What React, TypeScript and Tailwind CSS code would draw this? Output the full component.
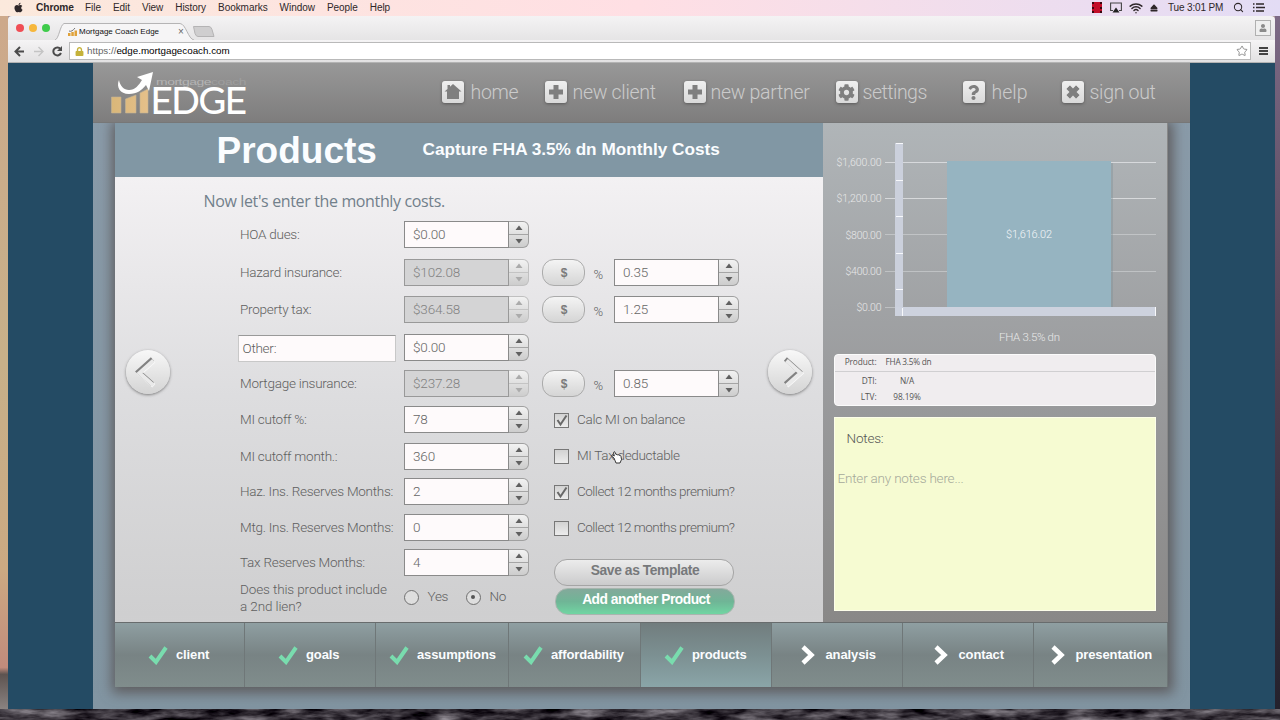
import type { ReactNode } from "react";
import { Wifi, Search, Star } from "lucide-react";
import { FaApple, FaCog, FaQuestion, FaUser, FaLock, FaEject } from "react-icons/fa";

const menus = ["File", "Edit", "View", "History", "Bookmarks", "Window", "People", "Help"];

function MenuBar() {
  return (
    <div className="flex h-4 shrink-0 items-center bg-gradient-to-r from-[#fbe9dc] via-[#ffdfe4] to-[#e3dcf5] pb-px pl-[13px] text-[10px] text-[#2e2729]">
      <FaApple className="h-[11px] w-[11px]" />
      <b className="ml-3 w-[37px] text-[10.200px] tracking-[-0.1px]">Chrome</b>
      <div className="ml-3 flex gap-3 tracking-[-0.050px]">
        {menus.map((m) => (
          <span key={m}>{m}</span>
        ))}
      </div>
      <div className="ml-auto flex items-center pr-[15px]">
        <div className="h-[11px] w-[10px] border-x-2 border-dotted border-[#3a0710] bg-[#c20d28]" />
        <svg className="ml-[8px]" width="12" height="11" viewBox="0 0 12 11">
          <path d="M3 8.500H.600V1h10.800v7.500H9" fill="none" stroke="#444" strokeWidth="1.100" />
          <path d="M6 5.500l3.500 5h-7z" fill="#222" />
        </svg>
        <Wifi className="ml-[7px] h-[14px] w-[14px]" strokeWidth={2.5} />
        <FaEject className="ml-[7px] h-[8px] w-[8px]" />
        <span className="ml-[10px] w-[56px] whitespace-nowrap tracking-[-0.150px]">Tue 3:01 PM</span>
        <Search className="ml-[9px] h-[11px] w-[11px]" strokeWidth={2.2} />
        <svg className="ml-[9px] h-[9px] w-3" viewBox="0 0 12 9" stroke="currentColor" strokeWidth="1.4">
          <path d="M0 1h1.5M0 4.500h1.5M0 8h1.500M3 1h8M3 4.500h9M3 8h8" />
        </svg>
      </div>
    </div>
  );
}

function BrowserChrome() {
  return (
    <div className="h-[47px] shrink-0 rounded-t bg-gradient-to-b from-[#f4f3f4] to-[#d8d7d8]">
      <div className="flex h-6 items-end pr-[4px] pl-2">
        <div className="mb-2 flex gap-[5px]">
          <span className="h-2 w-2 rounded-full bg-[#f04e55]" />
          <span className="h-2 w-2 rounded-full bg-[#f6b73c]" />
          <span className="h-2 w-2 rounded-full bg-[#3fcb4b]" />
        </div>
        <div className="relative ml-[5px] h-[17px] w-[139px]">
          <svg className="absolute inset-0" width="139" height="17">
            <path d="M0 17C4 16 5 2 9 .500H125C131 1 133 16 139 17" fill="#f6f5f6" stroke="#b5b4b5" />
          </svg>
          <div className="relative flex h-full items-center pl-[13px] text-[8px] text-[#111]">
            <svg width="9" height="9" viewBox="0 0 9 9">
              <path d="M0 6h2.500v3H0zM3.300 5h2.500v4H3.300zM6.500 3.500H9V9H6.500z" fill="#e0a23a" />
              <path d="M1 4c2 1 4-.5 6-3" fill="none" stroke="#777" />
            </svg>
            <span className="ml-[2px] w-[80px] whitespace-nowrap">Mortgage Coach Edge</span>
            <span className="ml-[19px] text-[10px] leading-none text-[#666]">×</span>
          </div>
        </div>
        <svg className="mb-[3px] -ml-px" width="22" height="11">
          <path d="M.500.500H16q2 0 3 3l2 7H5q-2 0-3-3z" fill="#cfcecf" stroke="#b4b3b4" />
        </svg>
        <div className="mb-1 ml-auto flex h-4 w-4 items-end justify-center border border-[#b0b0b0] bg-[#efefef] pb-[3px]">
          <FaUser className="h-2 w-2 text-[#8b8b8b]" />
        </div>
      </div>
      <div className="flex h-[23px] items-center border-b border-[#b3b3b3] bg-gradient-to-b from-[#f5f4f5] to-[#e2e1e2] pl-[6px]">
        <svg width="50" height="11" viewBox="0 0 50 11" fill="none" strokeWidth="2">
          <path d="M10 5.500H1.800M6 1L1.500 5.500 6 10" stroke="#4b4b4b" />
          <path d="M20 5.500h8M24.500 1L29 5.500 24.500 10" stroke="#c4c4c4" strokeWidth="1.400" />
          <path d="M46.500 3A4 4 0 1 0 47 7" stroke="#4b4b4b" />
          <path d="M48 0v5h-5z" fill="#4b4b4b" />
        </svg>
        <div className="ml-[5px] flex h-[18px] w-[1182px] items-center border border-[#b9b9b9] bg-white pl-[5px]">
          <FaLock className="h-[9px] w-[9px] text-[#c5b23a]" />
          <span className="ml-[3px] text-[9.8px] text-[#666]">
            https://<span className="text-black">edge.mortgagecoach.com</span>
          </span>
          <Star className="mr-[2px] ml-auto h-3 w-3 text-[#777]" strokeWidth={1.6} />
        </div>
        <div className="ml-[8px] flex w-[9px] flex-col gap-[1px]">
          <i className="h-[2px] bg-[#444]" />
          <i className="h-[2px] bg-[#444]" />
          <i className="h-[2px] bg-[#444]" />
        </div>
      </div>
    </div>
  );
}

function Logo() {
  return (
    <svg width="138" height="48" viewBox="0 0 138 48">
      <defs>
        <linearGradient id="bars" x2="1">
          <stop offset="0" stopColor="#d9b779" />
          <stop offset="1" stopColor="#e5c08a" />
        </linearGradient>
      </defs>
      <g fill="url(#bars)" stroke="#c3b496" strokeWidth=".6">
        <path d="M1.500 25h9.500v16H1.500zM15.500 27l10.500-4v18H15.500zM30 21l8-4v24h-8z" />
      </g>
      <path d="M9 8C6 15 10 22 19 22c8 0 13-4 17-9l3 6L43 0 27 5l5 3c-3 5-7 10-13 10-5 0-9-4-10-10z" fill="#fff" />
      <text x="46" y="12.500" fontSize="9" fill="#b4b4b4" textLength="90" lengthAdjust="spacingAndGlyphs" fontFamily="Liberation Sans">
        mortgage<tspan fill="#9e9e9e">coach</tspan>
      </text>
      <text x="41" y="40.500" fontSize="35" fill="#fff" stroke="#fff" strokeWidth="1.900" textLength="95" lengthAdjust="spacingAndGlyphs" fontFamily="Lato">
        EDGE
      </text>
    </svg>
  );
}

function HeaderLink({ icon, label, className }: { icon: ReactNode; label: string; className: string }) {
  return (
    <div className={`flex items-center ${className}`}>
      <span className="flex h-[22px] w-[22px] shrink-0 items-center justify-center rounded-[3px] bg-gradient-to-b from-[#efefef] to-[#d9d9d9] text-[#7f7f7f] shadow-[0_1px_3px_rgba(60,60,60,.6)]">
        {icon}
      </span>
      <span className="mt-px whitespace-nowrap">{label}</span>
    </div>
  );
}

function Plus({ className }: { className?: string }) {
  return (
    <svg width="14" height="14" viewBox="0 0 14 14" className={className}>
      <path d="M4.500 0h5v4.500H14v5H9.500V14h-5V9.500H0v-5h4.500z" fill="currentColor" />
    </svg>
  );
}

function House() {
  return (
    <svg width="18" height="18" viewBox="0 0 18 18">
      <path d="M9 1l8.500 7.500H15V16H3V8.500H.500L3.500 6V2h2.500v1.700z" fill="currentColor" />
    </svg>
  );
}

function AppHeader() {
  return (
    <header className="relative z-10 flex h-[60px] items-start border-b border-[#777] bg-gradient-to-b from-[#989898] to-[#7e7d7d] font-[Roboto] text-[19.500px] font-light tracking-[-0.300px] text-[#cbcbcb]">
      <div className="mt-[9px] ml-[17px] w-[332px]">
        <Logo />
      </div>
      <nav className="mt-[14px] flex">
        <HeaderLink className="w-[103px] gap-[7px]" label="home" icon={<House />} />
        <HeaderLink className="w-[139px] gap-[6px]" label="new client" icon={<Plus />} />
        <HeaderLink className="w-[152px] gap-[5px]" label="new partner" icon={<Plus />} />
        <HeaderLink className="w-[127px] gap-[5px] tracking-[-0.500px]" label="settings" icon={<FaCog size={17} />} />
        <HeaderLink className="w-[99px] gap-[7px] tracking-normal" label="help" icon={<FaQuestion size={15} />} />
        <HeaderLink className="gap-[6px]" label="sign out" icon={<Plus className="rotate-45" />} />
      </nav>
    </header>
  );
}

// chevron pressed into the button: dark upper left edges, bright lower right edges
function ArrowButton({ points }: { points: string }) {
  return (
    <div className="h-[44px] w-[44px] rounded-full bg-gradient-to-b from-[#f8f8f8] to-[#d4d4d4] shadow-[0_1px_3px_rgba(90,90,90,.75)]">
      <svg width="44" height="44" fill="none" strokeWidth="4.500">
        <polyline points={points} stroke="#fbfbfb" transform="translate(.8 .8)" />
        <polyline points={points} stroke="#828282" transform="translate(-.6 -1)" />
        <polyline points={points} stroke="#eaeaea" strokeWidth="4" transform="translate(.5 .5)" />
      </svg>
    </div>
  );
}

function NumberField({ value, disabled }: { value: string; disabled?: boolean }) {
  return (
    <div className="flex h-[27px]">
      <div
        className={`flex w-[105px] items-center border pb-px pl-[8.500px] tracking-[-0.150px] ${
          disabled ? "border-[#999] bg-[#d4d4d5] text-[#828282]" : "border-[#8a8a8a] bg-[#fefafb] text-[#666]"
        }`}
      >
        {value}
      </div>
      <div
        className={`flex w-5 flex-col rounded-r-md border border-l-0 bg-gradient-to-b from-[#f2f2f2] to-[#cdcdcd] ${
          disabled ? "border-[#c0c0c0] text-[#ababab]" : "border-[#a0a0a0] text-[#606060]"
        }`}
      >
        <svg className="h-full w-full" viewBox="0 0 19 25">
          <path d="M10 3.500l3.500 4.500h-7zM10 21.500L6.500 17h7z" fill="currentColor" />
          <path d="M0 12.500h19" stroke={disabled ? "#c4c4c4" : "#a5a5a5"} />
        </svg>
      </div>
    </div>
  );
}

const fields = [
  { label: "HOA dues:", value: "$0.00", h: "h-[38px]" },
  { label: "Hazard insurance:", value: "$102.08", h: "h-[37px]", disabled: true },
  { label: "Property tax:", value: "$364.58", h: "h-[38px]", disabled: true },
  { label: "Other:", value: "$0.00", h: "h-[36px]", editable: true },
  { label: "Mortgage insurance:", value: "$237.28", h: "h-[36px]", disabled: true },
  { label: "MI cutoff %:", value: "78", h: "h-[37px]" },
  { label: "MI cutoff month.:", value: "360", h: "h-[35px]" },
  { label: "Haz. Ins. Reserves Months:", value: "2", h: "h-[36px]" },
  { label: "Mtg. Ins. Reserves Months:", value: "0", h: "h-[35px]" },
  { label: "Tax Reserves Months:", value: "4", h: "h-[32px]" },
];

function Percent({ value, className }: { value: string; className: string }) {
  return (
    <div className={`flex ${className}`}>
      <div className="flex h-[27px] w-[43px] items-center justify-center rounded-[12px] border border-[#ababab] bg-gradient-to-b from-[#f4f4f4] to-[#d5d5d5] pl-[2px] font-['Liberation_Sans'] text-[12px] font-bold text-[#7a7a7a]">
        $
      </div>
      <span className="mt-[8px] ml-[9px] w-[20px] text-[13px] leading-4">%</span>
      <NumberField value={value} />
    </div>
  );
}

function Check({ label, checked, className }: { label: string; checked?: boolean; className: string }) {
  return (
    <div className={`ml-3 flex items-start pt-[7px] ${className}`}>
      <div className="h-[15px] w-[15px] shrink-0 border border-[#777] bg-gradient-to-b from-[#d2d2d2] to-[#ececec]">
        {checked && (
          <svg width="13" height="13" viewBox="0 0 13 13" fill="none">
            <path d="M2.500 6l3 4.500L11.500 1.500" stroke="#686868" strokeWidth="2" />
          </svg>
        )}
      </div>
      <span className="-mt-[2px] ml-[8.500px] leading-4 whitespace-nowrap">{label}</span>
    </div>
  );
}

function Radio({ label, on }: { label: string; on?: boolean }) {
  return (
    <div className="flex items-center">
      <span className="flex h-[15px] w-[15px] items-center justify-center rounded-full border border-[#707070] bg-[#dedede]">
        {on && <span className="h-1 w-1 rounded-full bg-[#555]" />}
      </span>
      <span className="-mt-[2px] ml-[9px] w-[38px]">{label}</span>
    </div>
  );
}

function Cursor() {
  return (
    <svg className="absolute top-[230px] left-[69px]" width="12" height="13" viewBox="0 0 12 13">
      <path
        d="M3 7L1 5.500Q0 4.500 1.200 4L3.300 5 2.500 1.500Q3 0 4 1.200L5 3.500Q6 2.800 6.800 4q1-.6 1.700.5 1.200-.3 1.500 1l.5 3L9 12H5z"
        fill="#fff"
        stroke="#222"
        strokeWidth=".9"
      />
    </svg>
  );
}

function ProductForm() {
  return (
    <section className="flex w-[708px] flex-col bg-gradient-to-b from-[#f6f4f6] via-[#dbdbdd] to-[#cfcfd0]">
      <div className="flex h-[54px] items-center bg-[#8197a4] font-bold text-[#fbfdff]">
        <h1 className="ml-[102px] w-[205px] text-[37px] leading-none">Products</h1>
        <h2 className="ml-px text-[17.200px] leading-none">Capture FHA 3.5% dn Monthly Costs</h2>
      </div>
      <div className="flex bg-gradient-to-b from-[#f3f1f3] via-[#dddddf] to-[#cfcfd0]">
        <div className="w-[123px] pt-[173px] pl-[11px]">
          <ArrowButton points="27,10 13,22.500 27,35" />
        </div>
        <div className="w-[530px] font-[Roboto] text-[13.500px] font-light tracking-[-0.260px] text-[#5f5f5f]">
          <p className="-ml-[34px] h-[44px] pt-[12px] font-['Open_Sans'] text-[16px] leading-6 font-normal tracking-[-0.360px] text-[#72808b]">
            Now let's enter the monthly costs.
          </p>
          <div className="flex">
            <div className="w-[304px]">
              {fields.map((f) => (
                <div key={f.label} className={`flex ${f.h}`}>
                  {f.editable ? (
                    <div className="mt-px mr-2 flex h-[27px] w-[158px] items-center border border-t-[#999] border-[#c8c8c8] bg-[#fefafb] pl-1">
                      {f.label}
                    </div>
                  ) : (
                    <div className="flex h-[26px] w-[166px] items-center pl-[2.500px] whitespace-nowrap">{f.label}</div>
                  )}
                  <NumberField value={f.value} disabled={f.disabled} />
                </div>
              ))}
              <div className="flex">
                <p className="w-[166px] pr-3 pl-[2.500px] leading-[17px] tracking-[-0.120px]">
                  Does this product include a&nbsp;2nd lien?
                </p>
                <div className="flex h-8 items-center">
                  <Radio label="Yes" />
                  <Radio label="No" on />
                </div>
              </div>
            </div>
            <div className="relative pt-[38px]">
              <Percent value="0.35" className="h-[37px]" />
              <Percent value="1.25" className="h-[74px]" />
              <Percent value="0.85" className="h-[36px]" />
              <Check label="Calc MI on balance" checked className="h-[36px] tracking-[-0.250px]" />
              <Check label="MI Tax deductable" className="h-[36px] tracking-[-0.320px]" />
              <Check label="Collect 12 months premium?" checked className="h-[36px] tracking-[-0.500px]" />
              <Check label="Collect 12 months premium?" className="h-[45px] tracking-[-0.500px]" />
              <div className="ml-3 flex w-[181px] flex-col gap-[2px] font-['Liberation_Sans'] text-[13.800px] font-bold tracking-[-0.400px]">
                <button className="h-[27px] w-[180px] rounded-[13px] border border-[#a5a5a5] bg-gradient-to-b from-[#ececec] to-[#cbcbcc] pb-1 pl-[3px] leading-none text-[#77797b]">
                  Save as Template
                </button>
                <button className="ml-px h-[27px] w-[180px] rounded-[13px] border border-[#a8b5ae] bg-gradient-to-b from-[#83a99b] via-[#6fb596] to-[#70d5a2] pb-1 pl-[3px] leading-none tracking-[-0.500px] text-white">
                  Add another Product
                </button>
              </div>
              <Cursor />
            </div>
          </div>
        </div>
        <div className="pt-[173px]">
          <ArrowButton points="18,10 32,22.500 18,35" />
        </div>
      </div>
    </section>
  );
}

const ticks = [
  { y: 39, label: "$1,600.00", w: 45 },
  { y: 75, label: "$1,200.00", w: 45 },
  { y: 111.5, label: "$800.00", w: 36 },
  { y: 148, label: "$400.00", w: 36 },
  { y: 184, label: "$0.00", w: 25 },
];

function Chart() {
  return (
    <svg width="345" height="226" fontFamily="Roboto" fontWeight="300" fill="#e8e8e8">
      {ticks.map((t) => (
        <g key={t.label}>
          <path d={`M62 ${Math.floor(t.y)}.5h271`} stroke="#dcdee0" strokeOpacity={t.y < 100 ? 0.9 : 0.5} />
          <text x="58.500" y={t.y + 4} fontSize="10.500" textAnchor="end" textLength={t.w}>
            {t.label}
          </text>
        </g>
      ))}
      <rect x="72" y="20" width="8" height="173" fill="#cbd0dc" />
      <rect x="72" y="184" width="261" height="9" fill="#cdd2de" />
      <path d="M73 20.500h7M73 57.500h7M73 93.500h7M73 130.500h7M73 166.500h7M79.500 185v8M332.500 184v9" stroke="#f7f8fb" />
      <path d="M124 40h166v144H124z" fill="#7e9299" opacity=".4" />
      <path d="M124 38h164v146H124z" fill="#96b4c1" />
      <text x="206" y="115" fontSize="11" textAnchor="middle" textLength="46" fill="#f4f7f9">
        $1,616.02
      </text>
      <text x="206.500" y="218" fontSize="11.500" textAnchor="middle" textLength="61">
        FHA 3.5% dn
      </text>
    </svg>
  );
}

function Sidebar() {
  return (
    <aside className="w-[345px] border-r border-[#888] bg-gradient-to-b from-[#b0b5b8] via-[#9b9c9e] to-[#898887]">
      <Chart />
      <div className="mt-[5px] ml-[11px] h-[52px] w-[322px] rounded border border-[#fbfbfb] bg-[#f0edef] font-['Open_Sans'] text-[8.300px] leading-4 tracking-[-0.100px] text-[#555]">
        <div className="-mt-px flex h-[18px] border-b border-[#d0cfd1]">
          <span className="w-[42px] text-right">Product:</span>
          <span className="ml-[9px] tracking-[-0.250px]">FHA 3.5% dn</span>
        </div>
        <div className="flex pt-px">
          <span className="w-[42px] text-right">DTI:</span>
          <span className="ml-[9px] w-[43px] text-center">N/A</span>
        </div>
        <div className="flex">
          <span className="w-[42px] text-right">LTV:</span>
          <span className="ml-[9px] w-[43px] text-center">98.19%</span>
        </div>
      </div>
      <div className="mt-[11px] ml-[11px] h-[194px] w-[322px] border border-[#fdfee9] bg-[#f6fbd2] pt-[11px] font-[Roboto] text-[13.500px] font-light tracking-[-0.200px]">
        <p className="pl-3 leading-[18px] text-[#555]">Notes:</p>
        <p className="mt-[22px] pl-[3px] leading-[18px] text-[#a5a99a]">Enter any notes here...</p>
      </div>
    </aside>
  );
}

const steps = [
  { label: "client", done: true, className: "w-[130px] pl-[33px]" },
  { label: "goals", done: true, className: "w-[131px] pl-[33px]" },
  { label: "assumptions", done: true, className: "w-[133px] pl-[13px]" },
  { label: "affordability", done: true, className: "w-[132px] pl-[14px]" },
  { label: "products", done: true, active: true, className: "w-[131px] pl-[23px]" },
  { label: "analysis", className: "w-[131px] pl-[29px]" },
  { label: "contact", className: "w-[131px] pl-[31px]" },
  { label: "presentation", className: "w-[134px] pl-[17px]" },
];

function StepBar() {
  return (
    <footer className="flex h-[65px] border-t border-[#686c6d] text-[13px] font-bold text-[#fbfdff]">
      {steps.map((s) => (
        <div
          key={s.label}
          className={`flex items-center border-r border-[#6f7778] ${s.className} ${
            s.active
              ? "bg-gradient-to-b from-[#717d7e] via-[#7c9092] to-[#8aa5a8]"
              : "bg-gradient-to-b from-[#8f9fa2] via-[#788384] to-[#808d8c]"
          }`}
        >
          {s.done ? (
            <svg className="mr-[8.500px] shrink-0" width="20" height="19" viewBox="0 0 20 19" fill="none">
              <path d="M2 10l6 6L18 1.500" stroke="#79dcae" strokeWidth="4" />
            </svg>
          ) : (
            <svg className="mr-[11px] shrink-0" width="14" height="20" viewBox="0 0 14 20" fill="none">
              <path d="M2 2l8.500 8L2 18" stroke="#fff" strokeWidth="4.500" />
            </svg>
          )}
          <span className="-mt-px tracking-[-0.120px]">{s.label}</span>
        </div>
      ))}
    </footer>
  );
}

function Rocks() {
  return (
    <svg width="1280" height="11" className="block">
      <filter id="rock" x="0" y="0" width="1" height="1" colorInterpolationFilters="sRGB">
        <feTurbulence type="fractalNoise" baseFrequency=".03 .12" numOctaves="4" seed="8" />
        <feColorMatrix values=".9 0 0 0 -.22  .9 0 0 0 -.24  .9 0 0 0 -.21  0 0 0 0 1" />
      </filter>
      <rect width="1280" height="11" filter="url(#rock)" />
    </svg>
  );
}

export default function App() {
  return (
    <div className="flex h-[720px] w-[1280px] flex-col overflow-hidden font-['Liberation_Sans',sans-serif]">
      <MenuBar />
      <div className="flex h-[693px]">
        <div className="w-2 bg-[linear-gradient(180deg,#cda98b,#c7b089_50%,#cba982_80%,#c18b7c_94%,#5d5350_95%,#8a8381)]" />
        <div className="flex w-[1267px] flex-col overflow-hidden bg-[#a79498]">
          <BrowserChrome />
          <div className="flex flex-1 justify-center bg-[#244b64] pr-[1px]">
            <div className="w-[1097px] bg-gradient-to-b from-[#8b9caa] to-[#8295a2]">
              <AppHeader />
              <main className="ml-[22px] w-[1053px] shadow-[1px_2px_12px_4px_rgba(82,74,72,.75)]">
                <div className="flex h-[499px]">
                  <ProductForm />
                  <Sidebar />
                </div>
                <StepBar />
              </main>
            </div>
          </div>
        </div>
        <div className="flex-1 bg-gradient-to-b from-[#7d6a86] via-[#4f4052] to-[#24212c]" />
      </div>
      <Rocks />
    </div>
  );
}
